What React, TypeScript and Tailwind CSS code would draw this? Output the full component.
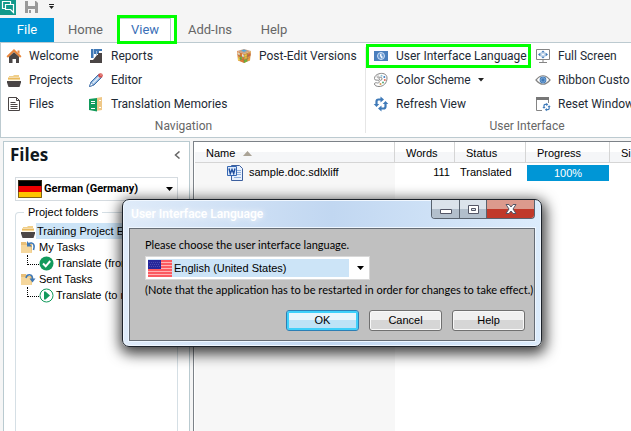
import type { ReactNode } from "react";

const ui = "font-[Roboto,'Open_Sans',sans-serif]";
const heading = "font-['Open_Sans','Noto_Sans',sans-serif]";
const classic = "font-['Liberation_Sans',Arial,sans-serif]";
const prose = "font-[Lato,'Liberation_Sans',sans-serif]";

function Svg({ w = 16, h = 16, className = "", children }: { w?: number; h?: number; className?: string; children: ReactNode }) {
  return (
    <svg width={w} height={h} viewBox={`0 0 ${w} ${h}`} className={`shrink-0 ${className}`} aria-hidden="true">
      {children}
    </svg>
  );
}

const HomeIcon = () => (
  <Svg>
    <path d="M3 8.500 8 4l5 4.500V15h-3v-4H6.500v4H3z" fill="#4a4545" />
    <path d="M1.200 9 8 2.500 14.800 9" fill="none" stroke="#e8853a" strokeWidth="2" />
    <path d="M11.500 2.500h2V6l-2-2z" fill="#e8853a" />
  </Svg>
);

const ProjectsIcon = () => (
  <Svg>
    <path d="M3 4h4l1-1h5v2H3z" fill="#f0cf8a" />
    <path d="M2 5.500h12V8H2z" fill="#e9b95c" />
    <path d="M2 8h12" stroke="#fff3d2" />
    <path d="M1 9h14v1.500L13.500 15h-11L1 10.500z" fill="#4a4545" />
  </Svg>
);

const FilesIcon = () => (
  <Svg>
    <path d="M2.500 1.500h8l3 3v10h-11z" fill="#fff" stroke="#4a4545" />
    <path d="M10.500 1.500v3h3M4.500 6.500h5M4.500 8.500h7M4.500 10.500h7M4.500 12.500h7" fill="none" stroke="#4a4545" />
  </Svg>
);

const ReportsIcon = () => (
  <Svg>
    <path d="M3 1h2v9H3zM6 1h8v2h-3v3H6z" fill="#3f78b5" />
    <path d="M2 15v-3h3l4-5h1V5h4v10z" fill="#4a4545" />
    <path d="M5.500 1v9M8.500 3v4" stroke="#9dbbdc" />
  </Svg>
);

const EditorIcon = () => (
  <Svg>
    <path d="M1.500 14.500 3 10l7.500-7.500 3 3L6 13z" fill="#8fb4dc" stroke="#3f70ab" />
    <path d="M4.500 11.500 11.500 4.500" stroke="#e2eefa" strokeWidth="1.500" />
    <path d="M1.500 14.500 3 10.500 5.500 13z" fill="#fff" stroke="#3f70ab" strokeWidth=".7" />
    <circle cx="12.500" cy="3.500" r="2.300" fill="#d4504e" />
    <circle cx="13" cy="3" r=".8" fill="#f6b2ac" />
  </Svg>
);

const MemoriesIcon = () => (
  <Svg>
    <path d="M8 2 14 1v13l-6 1z" fill="#efc888" />
    <path d="M11 4.500h2M11 11.500h2" stroke="#fff" />
    <path d="M1 3 9 2v13.500L1 14z" fill="#129a5c" />
    <path d="M3 5.500h4M3 7.500h4M3 12.500h4" stroke="#fff" />
  </Svg>
);

const CubeIcon = () => (
  <Svg>
    <path d="M1 3 8 1l7 2-7 3z" fill="#c9a38a" />
    <path d="M1 3 8 6v9l-6-2.500z" fill="#df7a35" />
    <path d="M15 3 8 6v9l6-2.500z" fill="#d8a04a" />
    <path d="M5 2.500 8 1.500l3 1-3 1.500z" fill="#55a8dc" />
    <path d="M1.500 4 4 5v2.500L1.500 6.500z" fill="#e9d8b8" />
    <path d="M6 6l2 .8V9.500L6 8.700z" fill="#e8e2d6" />
    <path d="M4 8.500 6 9.300V12l-2-.8zM8 12l3-1v2.500L8 15z" fill="#6db63c" />
    <path d="M8 7.500 11 6.500v2.700L8 10.500z" fill="#f0c93b" />
    <path d="M11.500 6 14.500 5v3l-3 1.200z" fill="#d26a42" />
    <path d="M11.500 10 14 9v3l-2.500 1z" fill="#f2a33a" />
    <path d="M2 8.500 4 9.300V13l-2-.7z" fill="#f2d34a" />
    <path d="M1.500 6.500 8 9.500l6.500-3M2 9.500 8 12.300l6-2.800M4 4.500v8.500M11.300 5v8.500M8 6v9" fill="none" stroke="#7a6a50" strokeWidth=".4" />
  </Svg>
);

const LanguageIcon = () => (
  <Svg>
    <path d="M1 3h14v10H1z" fill="#4a7fbd" />
    <circle cx="8" cy="8" r="3.500" fill="#6a99cf" stroke="#dceafa" strokeWidth=".9" />
    <path d="M7 6 8.500 5.500v2.200L10 9 8.500 10.500 7 8z" fill="#f5faff" />
  </Svg>
);

const PaletteIcon = () => (
  <Svg>
    <path d="M6 1.800C9 .8 14 1.500 14 6c0 5-3.500 8.500-8 8.500-2.500 0-4.500-1-4.500-2.500S3 10.500 4.500 11 7 9.500 5.500 8.500 1.500 9 1.500 6.500 3.500 2.500 6 1.800z" fill="#fff" stroke="#858585" />
    <circle cx="7.500" cy="6.800" r="1.500" fill="#fff" stroke="#858585" />
    <circle cx="5" cy="4.800" r="1" fill="none" stroke="#999" strokeWidth=".8" />
    <circle cx="8.500" cy="3.700" r="1" fill="#8ec5d8" />
    <circle cx="11.300" cy="5" r="1" fill="#3f7bc0" />
    <circle cx="11.800" cy="8" r="1" fill="#e06a55" />
    <circle cx="10" cy="10.500" r="1" fill="#55a878" />
    <circle cx="7.500" cy="12" r="1" fill="#d59a4a" />
  </Svg>
);

const refreshShape = (
  <>
    <path d="M3.500 8.500v-3q0-2 2-2H9M12.500 7.500v3q0 2-2 2H7" fill="none" stroke="#3f7ab8" strokeWidth="2.200" />
    <path d="M7.500.5 11 3.500 7.500 6.500zM8.500 9.500 5 12.500l3.500 3z" fill="#3f7ab8" />
    <path d="M.7 8h5.600l-2.800 3zM9.700 8h5.600l-2.800-3z" fill="#3f7ab8" />
  </>
);

const RefreshIcon = () => <Svg>{refreshShape}</Svg>;

const FullScreenIcon = () => (
  <Svg>
    <path d="M1.500 1.500h13v10h-13zM8 11.500v3M4 14.500h8" fill="none" stroke="#858585" />
    <path d="M8 2.500 10 4.500H6zM8 10.500l2-2H6zM3 6.500l2.500-2v4zM13 6.500l-2.500-2v4z" fill="#3f7ab8" />
    <path d="M6.500 5.500h3v2h-3z" fill="none" stroke="#3f7ab8" strokeWidth=".6" strokeDasharray="1 1" />
  </Svg>
);

const EyeIcon = () => (
  <Svg>
    <path d="M1 8q7-8.500 14 0-7 8.500-14 0z" fill="#fff" stroke="#858585" strokeWidth="1.200" />
    <circle cx="8" cy="8" r="3.400" fill="#3f7ab8" />
    <circle cx="8" cy="8" r="2.200" fill="none" stroke="#8eb4de" strokeWidth=".8" />
  </Svg>
);

const ResetIcon = () => (
  <Svg>
    <path d="M7 14.500H1.500v-13h12V7" fill="none" stroke="#858585" />
    <path d="M1 1h13v3H1z" fill="#777" />
    <g transform="translate(7 6.500) scale(.57)">{refreshShape}</g>
  </Svg>
);

function GermanFlag() {
  return (
    <Svg w={24} h={18}>
      <path d="M0 0h24v6H0z" fill="#000" />
      <path d="M0 6h24v6H0z" fill="#f00000" />
      <path d="M0 12h24v6H0z" fill="#ffc400" />
      <path d="M.5.5h23v17H.5z" fill="none" stroke="#4a3a20" strokeWidth=".7" />
    </Svg>
  );
}

function UsFlag() {
  return (
    <Svg w={24} h={17}>
      <path d="M0 0h24v17H0z" fill="#ffb4b4" />
      <path d="M0 1h24M0 4h24M0 7h24M0 10h24M0 13h24M0 16h24" stroke="#fa3c46" strokeWidth="1.600" />
      <path d="M0 0h13v9H0z" fill="#26269a" />
      <path d="M1 2.500h11M2 4.500h10M1 6.500h11" stroke="#4a4ab0" strokeDasharray="1 1" />
    </Svg>
  );
}

function TaskFolder({ sent = false }: { sent?: boolean }) {
  return (
    <Svg w={16} h={14}>
      <path d="M1 13V2h5l1 2h5v9z" fill="#e9c079" />
      <path d="M1 5h9l2 8H1z" fill="#f5d79d" />
      {sent ? (
        <>
          <path d="M6 6q1-4 4.500-3Q12.500 3.500 12.500 7" fill="none" stroke="#3f78b5" strokeWidth="1.600" />
          <path d="M9.500 6.500h6l-3 4z" fill="#3f78b5" />
        </>
      ) : (
        <>
          <path d="M13.500 10q2-6-2-7Q10 2.800 8.500 4" fill="none" stroke="#3f78b5" strokeWidth="1.600" />
          <path d="M7 1v5.500h5z" fill="#3f78b5" />
        </>
      )}
    </Svg>
  );
}

function StatusIcon({ done = false }: { done?: boolean }) {
  return (
    <Svg w={15} h={15}>
      {done ? (
        <>
          <circle cx="7.500" cy="7.500" r="7" fill="#129a5c" />
          <path d="m4 7.500 2.700 2.800L11.200 5" fill="none" stroke="#fff" strokeWidth="2" />
        </>
      ) : (
        <>
          <circle cx="7.500" cy="7.500" r="6.500" fill="#fff" stroke="#129a5c" />
          <path d="M5 3.500h1.500L11 7.500l-4.500 4H5z" fill="#129a5c" />
        </>
      )}
    </Svg>
  );
}

const WordIcon = () => (
  <Svg>
    <path d="M4.500.5h8l3 3v12h-11z" fill="#e8f0fc" stroke="#3c5f9e" />
    <path d="M10 5.500h4M10 7.500h4M10 9.500h4M7 12.500h7" stroke="#8faedb" />
    <path d="M.5 1.500h9v9h-9z" fill="#dce9fb" stroke="#3567b3" />
    <path d="m2 3.500 1.300 5L5 4.500l1.700 4 1.300-5" fill="none" stroke="#1f4e9e" strokeWidth="1.400" />
  </Svg>
);

function Command({
  icon,
  label,
  className = "gap-[7px] pl-1",
  menu = false,
}: {
  icon: ReactNode;
  label: string;
  className?: string;
  menu?: boolean;
}) {
  return (
    <button type="button" className={`flex h-6 items-center whitespace-nowrap ${className}`}>
      {icon}
      <span>{label}</span>
      {menu && (
        <Svg w={6} h={4}>
          <path d="M0 0h6L3 3.500z" fill="#222" />
        </Svg>
      )}
    </button>
  );
}

function Ribbon() {
  return (
    <div className="flex h-24 shrink-0 overflow-hidden border-y border-l border-[#bccad0] bg-white text-xs text-[#1e2a35]">
      <section className="flex w-[364px] shrink-0 flex-col pt-px pl-px">
        <div className="flex">
          <div className="flex w-[82px] flex-col">
            <Command icon={<HomeIcon />} label="Welcome" />
            <Command icon={<ProjectsIcon />} label="Projects" />
            <Command icon={<FilesIcon />} label="Files" />
          </div>
          <div className="flex w-[148px] flex-col">
            <Command icon={<ReportsIcon />} label="Reports" />
            <Command icon={<EditorIcon />} label="Editor" />
            <Command icon={<MemoriesIcon />} label="Translation Memories" />
          </div>
          <div className="flex flex-col">
            <Command icon={<CubeIcon />} label="Post-Edit Versions" />
          </div>
        </div>
        <h2 className="text-center leading-5 text-[#666]">Navigation</h2>
      </section>
      <div className="my-1 w-px shrink-0 bg-[#e6e6e6]" />
      <section className="w-[322px] shrink-0 pt-px">
        <div className="flex">
          <div className="flex w-[165px] flex-col">
            <Command
              icon={<LanguageIcon />}
              label="User Interface Language"
              className="gap-[7px] pl-[7px] outline-3 -outline-offset-3 outline-[#00ff00]"
            />
            <Command icon={<PaletteIcon />} label="Color Scheme" className="gap-[7px] pl-[7px]" menu />
            <Command icon={<RefreshIcon />} label="Refresh View" className="gap-[7px] pl-[7px]" />
          </div>
          <div className="flex flex-col">
            <Command icon={<FullScreenIcon />} label="Full Screen" />
            <Command icon={<EyeIcon />} label="Ribbon Custo" />
            <Command icon={<ResetIcon />} label="Reset Window" />
          </div>
        </div>
        <h2 className="text-center leading-5 text-[#666]">User Interface</h2>
      </section>
    </div>
  );
}

function TopBar() {
  return (
    <header className="shrink-0 bg-[#f5f5f5]">
      <div className="flex h-[18px] items-start gap-[9px]">
        <Svg w={16} h={15}>
          <path d="M0 0h16v15H0z" fill="#13998b" />
          <path d="M5 8.500H2.500v-7h8V4" fill="none" stroke="#fff" strokeWidth="1.200" />
          <path d="M5.500 4.500h8v8l-3-3h-5z" fill="#13998b" stroke="#fff" strokeWidth="1.200" />
        </Svg>
        <Svg w={13} h={14}>
          <path d="M0 1h11l2 2v10H0z" fill="#999" />
          <path d="M3 1h7v5H3zM3 9h7v4H3z" fill="#f5f5f5" />
          <path d="M4 10h2v3H4z" fill="#999" />
        </Svg>
        <Svg w={7} h={10} className="ml-px">
          <path d="M1 4h5v1H1zM1 6h5L3.500 9z" fill="#222" />
        </Svg>
      </div>
      <nav className="flex h-6 items-stretch text-[13px] text-[#666]">
        <button type="button" className="w-[54px] bg-[#0096d6] text-white">File</button>
        <button type="button" className="w-[63px]">Home</button>
        <button type="button" className="z-10 -mt-[3px] -mb-[2px] w-[60px] border-3 border-[#00ff00] bg-white pr-[3px] text-[#3a6fb7]">
          <span className="flex h-full items-center justify-center border-t border-r border-[#bccad0]">View</span>
        </button>
        <button type="button" className="w-[66px]">Add-Ins</button>
        <button type="button" className="w-[62px]">Help</button>
      </nav>
    </header>
  );
}

function Caret() {
  return (
    <Svg w={7} h={4} className="pointer-events-none">
      <path d="M0 0h7L3.500 4z" fill="#000" />
    </Svg>
  );
}

function TreeLeaf({ done = false, label }: { done?: boolean; label: string }) {
  return (
    <li className="flex h-4 items-center pl-[7px]">
      <span className="mb-1.5 h-2.5 w-3 border-b border-l border-dotted border-black" />
      <StatusIcon done={done} />
      <span className="pl-0.5">{label}</span>
    </li>
  );
}

function FilesPanel() {
  return (
    <aside className="flex w-[187px] shrink-0 flex-col border border-b-0 border-[#b9cad0] bg-white">
      <div className="flex h-[35px] items-center justify-between pr-[9px] pb-2.5 pl-1.5">
        <h1 className={`text-[17px] font-bold text-[#101820] ${heading}`}>Files</h1>
        <button type="button" aria-label="Collapse">
          <Svg w={6} h={8}>
            <path d="M5.500.5 1.500 4l4 3.500" fill="none" stroke="#666" strokeWidth="1.500" />
          </Svg>
        </button>
      </div>
      <div className={`flex min-h-0 flex-1 flex-col px-[11px] text-[11px] text-black ${classic}`}>
        <label className="flex h-6 shrink-0 items-center border border-[#d5dbe0] pr-1 pl-0.5">
          <GermanFlag />
          <select aria-label="Target language" className={`min-w-0 flex-1 appearance-none pl-0.5 text-[11px] font-bold ${ui}`}>
            <option>German (Germany)</option>
          </select>
          <Caret />
        </label>
        <fieldset className="mt-[3px] min-w-0 flex-1 rounded-t border border-b-0 border-[#d5dfe5] pl-1">
          <legend className="ml-1 px-1 leading-4">Project folders</legend>
          <ul className="pt-[3px] whitespace-nowrap">
            <li className="flex h-4 items-center">
              <ProjectsIcon />
              <span className="h-4 flex-1 bg-[#cce4f7] pl-px leading-4">Training Project Example</span>
            </li>
            <li className="flex h-4 items-center gap-[3px]"><TaskFolder />My Tasks</li>
            <TreeLeaf done label="Translate (from me)" />
            <li className="flex h-4 items-center gap-[3px]"><TaskFolder sent />Sent Tasks</li>
            <TreeLeaf label="Translate (to me)" />
          </ul>
        </fieldset>
      </div>
    </aside>
  );
}

const head = "h-5 border-b border-[#d5d5d5] bg-linear-to-b from-white from-50% to-[#f5f6f8] to-50% pt-[3px] pl-[11px] font-normal";

function FileTable() {
  return (
    <main className={`min-w-0 flex-1 overflow-hidden border-t border-l border-[#7c8288] bg-white pl-px text-[11px] text-black ${classic}`}>
      <table className="h-full w-full table-fixed border-separate border-spacing-0">
        <colgroup>
          <col className="w-[200px]" />
          <col className="w-[60px]" />
          <col className="w-[71px]" />
          <col className="w-[84px]" />
          <col />
        </colgroup>
        <thead>
          <tr className="text-left">
            <th className={`${head} border-r`}>
              <span className="flex items-center gap-2">
                Name
                <Svg w={9} h={5}>
                  <path d="M4.500 0 9 5H0z" fill="#aaa396" />
                </Svg>
              </span>
            </th>
            <th className={`${head} border-r`}>Words</th>
            <th className={`${head} border-r`}>Status</th>
            <th className={`${head} border-r`}>Progress</th>
            <th className={head}>Si</th>
          </tr>
        </thead>
        <tbody>
          <tr>
            <td className="h-5 bg-[#f7f7f7]">
              <span className="flex items-center gap-1.5 pl-8"><WordIcon />sample.doc.sdlxliff</span>
            </td>
            <td className="pr-[5px] text-right">111</td>
            <td className="pl-[5px]">Translated</td>
            <td className="px-px py-0.5">
              <div className="bg-[#0096d6] text-center leading-4 text-white">100%</div>
            </td>
            <td />
          </tr>
          <tr className="h-full">
            <td className="bg-[#f7f7f7]" />
            <td colSpan={4} />
          </tr>
        </tbody>
      </table>
    </main>
  );
}

function DialogButton({ children, primary = false }: { children: ReactNode; primary?: boolean }) {
  return (
    <button
      type="button"
      className={`h-[21px] w-[73px] rounded-[3px] border ${
        primary
          ? "border-[#2c7fb5] bg-linear-to-b from-[#e8f5fc] from-50% to-[#bde3f7] to-50% inset-ring-2 inset-ring-[#3fd0fa]"
          : "border-[#707070] bg-linear-to-b from-[#f0f0f0] from-50% to-[#d6d6d6] to-50% inset-ring-1 inset-ring-[#f8f8f8]"
      }`}
    >
      {children}
    </button>
  );
}

function LanguageDialog() {
  return (
    <div
      role="dialog"
      aria-labelledby="dialog-title"
      className={`absolute top-[199px] left-[122px] z-20 w-[420px] rounded-[7px] border border-[#1c222a] bg-linear-to-r from-[#dfebf9] via-[#c1d7f1] to-[#dcecfc] px-1.5 pb-[5px] text-[11px] text-black inset-ring-1 inset-ring-[#f0f7ff] shadow-[1px_4px_14px_3px_rgba(0,0,0,0.75)] ${classic}`}
    >
      <div className="flex h-7 items-start justify-between">
        <h2 id="dialog-title" className={`pl-0.5 text-xs leading-7 font-semibold text-white text-shadow-[0_0_6px_rgb(255_255_255)] ${ui}`}>
          User Interface Language
        </h2>
        <div className="flex h-[19px] overflow-hidden rounded-b-[4px] border border-t-0 border-[#59636f]">
          <button type="button" aria-label="Minimize" className="flex w-7 items-center justify-center border-r border-[#59636f] bg-linear-to-b from-[#dbe3eb] from-50% to-[#b2bfcc] to-50%">
            <Svg w={12} h={5} className="mt-1">
              <path d="M.5.5h11v4H.5z" fill="#fff" stroke="#535666" />
            </Svg>
          </button>
          <button type="button" aria-label="Maximize" className="flex w-[27px] items-center justify-center border-r border-[#59636f] bg-linear-to-b from-[#dbe3eb] from-50% to-[#b2bfcc] to-50%">
            <Svg w={11} h={9}>
              <path d="M.5.500h10v8H.5z" fill="#fff" stroke="#535666" />
              <path d="M3.500 3.500h4v2h-4z" fill="#dbe3eb" stroke="#535666" />
            </Svg>
          </button>
          <button type="button" aria-label="Close" className="flex w-[47px] items-center justify-center bg-linear-to-b from-[#dc9a8d] from-50% to-[#c0392a] to-50%">
            <Svg w={12} h={10}>
              <path d="M1 .5h3l2 2.500L8 .5h3L8 5l3 4.500H8L6 7 4 9.500H1L4 5z" fill="#fff" stroke="#535666" />
            </Svg>
          </button>
        </div>
      </div>
      <form className="border border-[#666d75] bg-[#c0c0c0] pt-2 pr-[9px] pb-[9px] pl-[15px] outline-1 outline-[#eef6ff]">
        <label htmlFor="language" className={`block leading-4 ${prose}`}>Please choose the user interface language.</label>
        <div className="mt-[3px] flex h-6 w-[225px] items-center border border-[#d8d8d8] bg-white py-0.5 pr-[5px] pl-0.5">
          <div className="flex h-[18px] flex-1 items-center bg-[#cce4f7]">
            <UsFlag />
            <select id="language" className="flex-1 appearance-none pl-0.5">
              <option>English (United States)</option>
            </select>
          </div>
          <span className="ml-2"><Caret /></span>
        </div>
        <p className={`mt-0.5 leading-4 whitespace-nowrap ${prose}`}>
          (Note that the application has to be restarted in order for changes to take effect.)
        </p>
        <div className="mt-3 flex justify-end gap-2.5">
          <DialogButton primary>OK</DialogButton>
          <DialogButton>Cancel</DialogButton>
          <DialogButton>Help</DialogButton>
        </div>
      </form>
    </div>
  );
}

export default function App() {
  return (
    <div className={`relative flex h-screen w-full flex-col overflow-hidden bg-[#f5f5f5] ${ui}`}>
      <TopBar />
      <Ribbon />
      <div className="flex min-h-0 flex-1 gap-[3px] pt-[3px] pl-[3px]">
        <FilesPanel />
        <FileTable />
      </div>
      <LanguageDialog />
    </div>
  );
}
